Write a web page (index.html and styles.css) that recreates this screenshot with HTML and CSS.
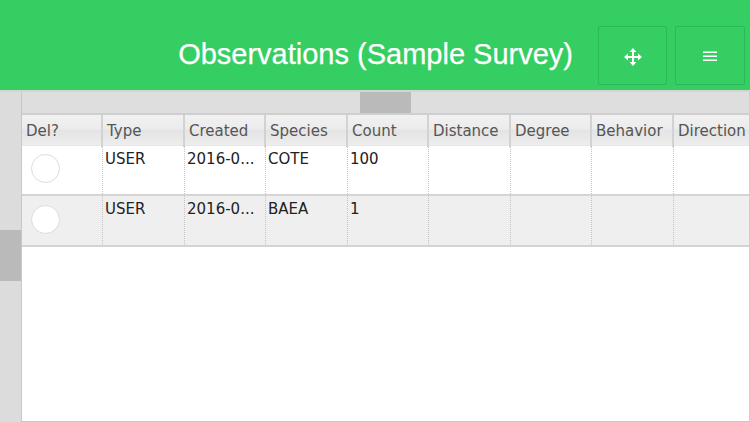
FILE: index.html
```html
<!DOCTYPE html>
<html lang="en">
<head>
  <meta charset="UTF-8" />
  <title>Observations (Sample Survey)</title>
  <link rel="stylesheet" href="styles.css">
</head>
<body>
  <header class="topbar">
    <h1>Observations (Sample Survey)</h1>
    <button type="button" class="tool-btn" aria-label="Move">
      <svg width="18" height="18" viewBox="0 0 18 18" fill="none" stroke="#fff" stroke-width="2">
        <path d="M9 2v14M2 9h14" />
        <path d="M9 0l-3.4 4h6.8zM9 18l-3.4-4h6.8zM0 9l4-3.4v6.8zM18 9l-4-3.4v6.8z" fill="#fff" stroke="none" />
      </svg>
    </button>
    <button type="button" class="tool-btn" aria-label="Menu">
      <svg width="14" height="11" viewBox="0 0 14 11" fill="#fff">
        <rect y="0.5" width="14" height="1.5" />
        <rect y="4.5" width="14" height="1.5" />
        <rect y="8.5" width="14" height="1.5" />
      </svg>
    </button>
  </header>

  <main class="content">
    <div class="v-scroll"><div class="v-thumb"></div></div>
    <div class="panel">
      <div class="h-scroll"><div class="h-thumb"></div></div>
      <div class="grid head">
        <div class="cell">Del?</div>
        <div class="cell">Type</div>
        <div class="cell">Created</div>
        <div class="cell">Species</div>
        <div class="cell">Count</div>
        <div class="cell">Distance</div>
        <div class="cell">Degree</div>
        <div class="cell">Behavior</div>
        <div class="cell">Direction</div>
      </div>
      <div class="grid row">
        <div class="cell"><span class="radio"></span></div>
        <div class="cell">USER</div>
        <div class="cell">2016-0...</div>
        <div class="cell">COTE</div>
        <div class="cell">100</div>
        <div class="cell"></div>
        <div class="cell"></div>
        <div class="cell"></div>
        <div class="cell"></div>
      </div>
      <div class="grid row alt">
        <div class="cell"><span class="radio"></span></div>
        <div class="cell">USER</div>
        <div class="cell">2016-0...</div>
        <div class="cell">BAEA</div>
        <div class="cell">1</div>
        <div class="cell"></div>
        <div class="cell"></div>
        <div class="cell"></div>
        <div class="cell"></div>
      </div>
    </div>
  </main>
</body>
</html>
```

FILE: styles.css
```css
* {
  margin: 0;
  padding: 0;
  box-sizing: border-box;
}
body {
  width: 750px;
  height: 422px;
  overflow: hidden;
  background: #fff;
  font-family: "DejaVu Sans", sans-serif;
  display: flex;
  flex-direction: column;
}
.topbar {
  height: 90px;
  background: #35ce62;
  display: flex;
  align-items: flex-start;
  justify-content: flex-end;
  padding: 26px 5px 0 0;
  gap: 8px;
}
.topbar h1 {
  font-family: "Liberation Sans", sans-serif;
  font-size: 29px;
  font-weight: normal;
  color: #fff;
  line-height: 56px;
  margin-right: 17px;
  -webkit-text-stroke: 0.25px #fff;
}
.tool-btn {
  width: 69px;
  height: 59px;
  background: #35ce62;
  border: 1px solid #2cb854;
  border-radius: 2px;
  display: flex;
  align-items: center;
  justify-content: center;
  padding-top: 2px;
}
.tool-btn:last-child {
  width: 70px;
}
.content {
  flex: 1;
  display: flex;
  border-top: 2px solid #d4d4d4;
  min-height: 0;
}
.v-scroll {
  flex: none;
  width: 22px;
  background: #dcdcdc;
  border-right: 1px solid #c8c8c8;
  padding-top: 138px;
}
.v-thumb {
  height: 51px;
  background: #bababa;
}
.panel {
  flex: 1;
  min-width: 0;
  border-bottom: 1px solid #c8c8c8;
  border-right: 1px solid #cfcfcf;
}
.h-scroll {
  height: 23px;
  background: #dedede;
  border-bottom: 2px solid #cfcfcf;
  padding-left: 338px;
}
.h-thumb {
  width: 51px;
  height: 21px;
  background: #bababa;
}
.grid {
  display: grid;
  grid-template-columns: 81px 82px 81px 82px 81px 82px 81px 82px 75px;
}
.head {
  height: 30px;
  background: linear-gradient(#f1f1f1 0, #ececec 45%, #e4e4e4 52%, #ededed 100%);
  color: #555;
  font-size: 15px;
  line-height: 32px;
}
.head .cell {
  border-right: 2px solid #d2d2d2;
  padding-left: 4px;
  white-space: nowrap;
}
.head .cell:last-child {
  border-right: 0;
}
.row {
  height: 51px;
  color: #222;
  font-size: 15px;
  line-height: 26px;
  background: #fff;
  border-top: 1px solid #e6e6e6;
  border-bottom: 2px solid #d4d4d4;
}
.row.alt {
  background: #efefef;
  border-top: 0;
}
.row .cell {
  border-right: 1px dotted #c4c4c4;
  padding-left: 2px;
  white-space: nowrap;
}
.row .cell:last-child {
  border-right: 0;
}
.radio {
  display: block;
  width: 29px;
  height: 29px;
  margin: 8px 0 0 7px;
  background: #fff;
  border: 1px solid #dcdcdc;
  border-radius: 50%;
}
.row.alt .radio {
  margin-top: 9px;
}
```
